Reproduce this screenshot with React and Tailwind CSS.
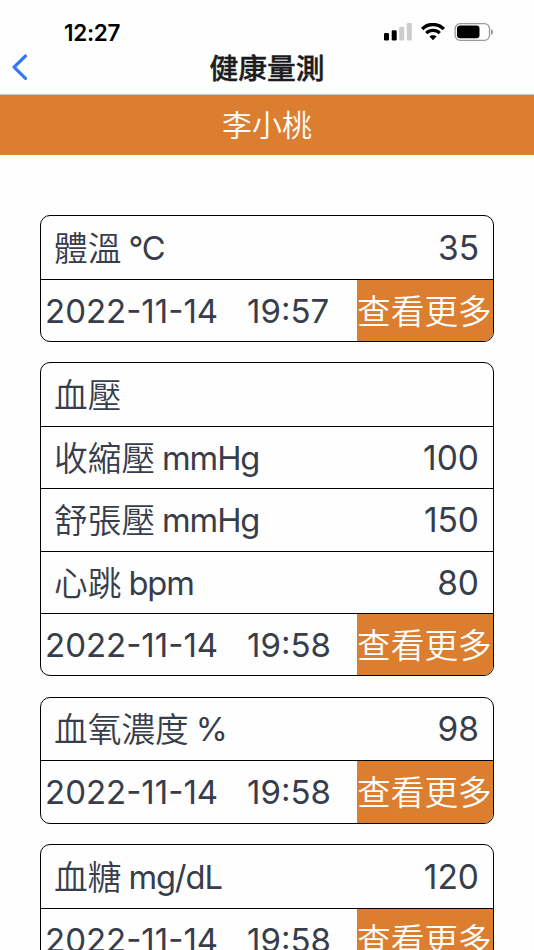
import React from "react";

const cards = [
  {
    id: "temperature",
    className: "h-[127px]",
    rows: [{ label: "體溫", unit: "°C", value: "35", height: "h-[64px]" }],
    date: "2022-11-14",
    time: "19:57",
  },
  {
    id: "pressure",
    className: "h-[314px] mt-5",
    rows: [
      { label: "血壓", unit: "", value: "", height: "h-[64px]" },
      { label: "收縮壓", unit: "mmHg", value: "100", height: "h-[62px]" },
      { label: "舒張壓", unit: "mmHg", value: "150", height: "h-[63px]" },
      { label: "心跳", unit: "bpm", value: "80", height: "h-[62px]" },
    ],
    date: "2022-11-14",
    time: "19:58",
  },
  {
    id: "oxygen",
    className: "h-[127px] mt-[21px]",
    rows: [{ label: "血氧濃度", unit: "%", value: "98", height: "h-[63px]" }],
    date: "2022-11-14",
    time: "19:58",
  },
  {
    id: "glucose",
    className: "h-[127px] mt-5",
    rows: [{ label: "血糖", unit: "mg/dL", value: "120", height: "h-[64px]" }],
    date: "2022-11-14",
    time: "19:58",
  },
];

const StatusBar = () => (
  <div className="h-[46px] shrink-0 flex items-start justify-between pl-[64px] pr-[40px] pt-[21px]">
    <span className="text-[22.5px] leading-[23px] tracking-[-0.3px] font-semibold text-black">12:27</span>
    <div className="flex items-start pt-[2px]">
      <svg className="w-[28px] h-[18px]" viewBox="0 0 28 18">
        <rect x="0" y="10" width="5" height="7.5" rx="1.3" fill="#000" />
        <rect x="7.7" y="7.2" width="5" height="10.3" rx="1.3" fill="#000" />
        <rect x="15.2" y="3.7" width="5" height="13.8" rx="1.3" fill="#ccc" />
        <rect x="22.8" y="0" width="5" height="17.5" rx="1.3" fill="#ccc" />
      </svg>
      <svg className="w-[24px] h-[18px] ml-[9px]" viewBox="0 0 24 18" fill="none" stroke="#000">
        <path d="M1.2 5.9C7.1 0.1 16.9 0.1 22.8 5.9" strokeWidth="3.5" />
        <path d="M5.2 10.2C9 6.4 15 6.4 18.8 10.2" strokeWidth="3.2" />
        <path d="M12 17.2L8.4 13.6C10.4 11.7 13.6 11.7 15.6 13.6Z" fill="#000" stroke="none" />
      </svg>
      <svg className="w-[40px] h-[18px] ml-[9px]" viewBox="0 0 40 18">
        <rect x="1.1" y="0.7" width="34.4" height="16.6" rx="5" fill="none" stroke="#999" strokeWidth="1.3" />
        <rect x="3" y="2.6" width="22.5" height="12.6" rx="3" fill="#000" />
        <path d="M37 6C39.8 7 39.8 11 37 12Z" fill="#999" />
      </svg>
    </div>
  </div>
);

const NavBar = () => (
  <div className="h-[49px] shrink-0 grid grid-cols-[1fr_auto_1fr] items-start border-b border-[#c8c8c8]">
    <svg className="w-[18px] h-[28px] ml-[11px] mt-[7px]" viewBox="0 0 18 28" fill="none">
      <path
        d="M14.5 3L3 14.2L14.5 25.4"
        stroke="#3478f6"
        strokeWidth="3.2"
        strokeLinecap="round"
        strokeLinejoin="round"
      />
    </svg>
    <h1 className="mt-[3px] text-[28.8px] leading-[40px] font-medium text-[#1c1c1e] [-webkit-text-stroke:0.4px_#1c1c1e]">
      健康量測
    </h1>
  </div>
);

const MeasureRow = ({ label, unit, value, height }) => (
  <div className={`${height} shrink-0 flex items-center justify-between pl-[13px] pr-[14px] border-b border-black`}>
    <div className="flex items-center gap-[7px]">
      <span className="pt-[2px] text-[33.7px]">{label}</span>
      <span className="text-[32.7px] tracking-[-1.1px] font-normal">{unit}</span>
    </div>
    <span className="text-[33.5px] font-normal">{value}</span>
  </div>
);

const MeasureCard = ({ card }) => (
  <div
    className={`${card.className} shrink-0 flex flex-col border border-black rounded-[10px] overflow-hidden leading-[40px]`}
  >
    {card.rows.map((row) => (
      <MeasureRow key={row.label} {...row} />
    ))}
    <div className="flex-1 flex items-stretch">
      <div className="w-[316px] flex items-center pl-[4px] text-[33px] font-normal">
        <span className="w-[202px]">{card.date}</span>
        <span>{card.time}</span>
      </div>
      <button className="flex-1 pt-[2px] bg-[#dc7e30] text-white text-[33.7px] whitespace-nowrap text-left">
        查看更多
      </button>
    </div>
  </div>
);

const App = () => {
  return (
    <div className="w-[534px] h-[950px] overflow-hidden flex flex-col bg-[#fefefe] text-[#373d4b] font-[350] font-['Inter','Noto_Sans_CJK_TC',sans-serif]">
      <StatusBar />
      <NavBar />
      <div className="h-[60px] shrink-0 flex items-center justify-center pt-px bg-[#dc7e30] text-white text-[30px]">
        李小桃
      </div>

      {/* Measurement cards */}
      <div className="flex-1 min-h-0 overflow-hidden flex flex-col px-[40px] pt-[60px]">
        {cards.map((card) => (
          <MeasureCard key={card.id} card={card} />
        ))}
      </div>
    </div>
  );
};

export default App;
